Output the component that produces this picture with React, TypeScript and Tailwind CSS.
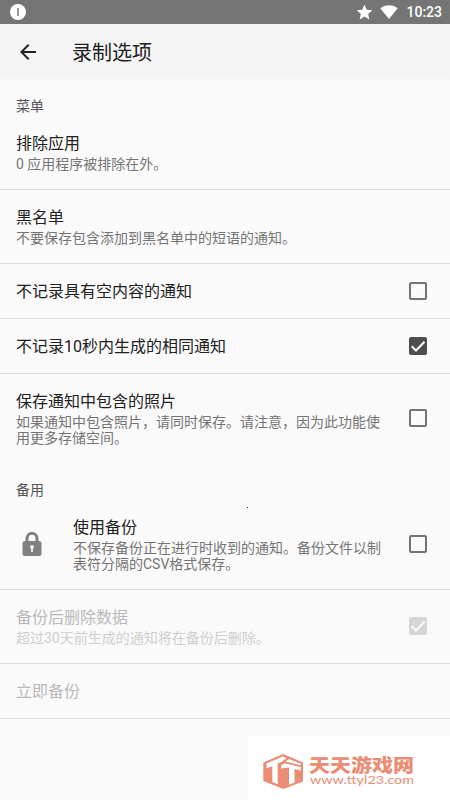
import { ReactNode, useState } from "react";

function Checkbox({
  checked,
  disabled = false,
  onClick,
}: {
  checked: boolean;
  disabled?: boolean;
  onClick?: () => void;
}) {
  return (
    <button
      role="checkbox"
      aria-checked={checked}
      disabled={disabled}
      onClick={onClick}
      className={`size-6 shrink-0 ${disabled ? "text-[#d6d6d6]" : checked ? "text-[#4d4d4d]" : "text-[#737373]"}`}
    >
      <svg viewBox="0 0 24 24" className="size-6" fill="none">
        {checked ? (
          <>
            <rect x="3" y="3" width="18" height="18" rx="2" fill="currentColor" />
            <path d="M5.7 12.2l4.3 4.3 8.5-8.8" stroke="#fafafa" strokeWidth="2" />
          </>
        ) : (
          <rect x="4" y="4" width="16" height="16" rx="1" stroke="currentColor" strokeWidth="2" />
        )}
      </svg>
    </button>
  );
}

function SectionTitle({ children }: { children: ReactNode }) {
  return <h2 className="px-4 text-sm leading-5 text-[#555555]">{children}</h2>;
}

function Row({
  title,
  summary,
  icon,
  disabled = false,
  divider = true,
  children,
}: {
  title: string;
  summary?: string;
  icon?: ReactNode;
  disabled?: boolean;
  divider?: boolean;
  children?: ReactNode;
}) {
  return (
    <div
      className={`flex items-center px-4 ${summary ? "py-[17px]" : "pb-[15px] pt-[17px]"} ${divider ? "border-b border-[#dadada]" : ""}`}
    >
      {icon && <div className="w-[57px] shrink-0">{icon}</div>}
      <div className="min-w-0 flex-1">
        <div className={`text-base leading-[22px] ${disabled ? "text-[#b9b9b9]" : "text-[#212121]"}`}>
          {title}
        </div>
        {summary && (
          <p
            className={`mt-px max-w-[368px] text-sm leading-4 ${disabled ? "text-[#cfcfcf]" : "text-[#757575]"}`}
          >
            {summary}
          </p>
        )}
      </div>
      {children && <div className="-mb-px -mt-[3px] ml-5 mr-1 flex">{children}</div>}
    </div>
  );
}

function LockIcon() {
  return (
    <svg viewBox="0 0 24 28" className="-mt-px ml-1 h-7 w-6" fill="none">
      <path d="M7 12V8.500a5 5.300 0 0 1 10 0V12" stroke="#808080" strokeWidth="3" />
      <rect x="2.500" y="11" width="19" height="15" rx="2.500" fill="#808080" />
      <circle cx="12" cy="17" r="2" fill="#fafafa" />
      <path d="M11.2 17h1.600v5h-1.600z" fill="#fafafa" />
    </svg>
  );
}

function SiteLogo() {
  return (
    <svg viewBox="0 0 202 64" className="h-16 w-[202px]" fill="#e98d74">
      {/* Cube with a T on both faces */}
      <path d="M35.300 18L55 26.500v19L35.300 53L15.300 45V26.500z" />
      <path d="M18.500 27.500L35 20.500l3.500 1.700L34 25.500l-4.300 2v20.700L24.300 46V30.200l-5.800 2z" fill="#fff" />
      <path d="M41 23l11.700 4.800v1.500L37.500 25.500z" fill="#fff" />
      <path d="M33 29.800L36.500 27.300L52.700 31v3.400L46.500 33v13.500L41 48.700V31.600L33 32.500z" fill="#fff" />
      <text
        x="61"
        y="35.500"
        textLength="105"
        lengthAdjust="spacingAndGlyphs"
        className="font-['Noto_Sans_CJK_SC',sans-serif] text-[18px] font-black"
      >
        天天游戏网
      </text>
      <text
        x="62"
        y="48"
        textLength="104"
        lengthAdjust="spacingAndGlyphs"
        className="font-['Lato',sans-serif] text-[11px]"
      >
        www.ttyl23.com
      </text>
    </svg>
  );
}

export default function App() {
  const [skipEmpty, setSkipEmpty] = useState(false);
  const [skipSame, setSkipSame] = useState(true);
  const [savePhotos, setSavePhotos] = useState(false);
  const [useBackup, setUseBackup] = useState(false);

  return (
    <div className="relative flex h-[800px] w-[450px] flex-col overflow-hidden bg-[#fafafa] font-['Roboto','Noto_Sans_CJK_SC',sans-serif]">
      {/* Status bar */}
      <div className="flex h-6 shrink-0 items-center justify-between bg-[#757575] pl-[10px] pr-2 text-white">
        <div className="flex size-4 items-center justify-center rounded-full bg-white">
          <div className="h-2 w-[2px] bg-[#999999]" />
        </div>
        <div className="flex items-center">
          <svg viewBox="0 0 24 24" className="mr-[7px] size-[17px]" fill="currentColor">
            <path d="M12 17.8L18.9 22l-1.8-7.9L23 8.9l-7.8-.7L12 1 8.8 8.2 1 8.9l5.9 5.2L5.1 22z" />
          </svg>
          <svg viewBox="0 0 18 14" className="mr-2 h-[14px] w-[18px]" fill="currentColor">
            <path d="M9 14L.3 3.2C2.7 1.3 5.7.2 9 .2s6.300 1.100 8.700 3z" />
          </svg>
          <span className="text-sm font-medium leading-6">10:23</span>
        </div>
      </div>

      {/* Toolbar */}
      <header className="flex h-14 shrink-0 items-center bg-linear-to-b from-[#f5f5f5] from-95% to-[#f8f8f8] px-4">
        <button aria-label="back" className="size-6 text-[#212121]">
          <svg viewBox="0 0 24 24" className="size-6" fill="currentColor">
            <path d="M20 11H7.830l5.590-5.590L12 4l-8 8 8 8 1.410-1.410L7.830 13H20z" />
          </svg>
        </button>
        <h1 className="ml-8 pt-0.5 text-xl leading-7 text-[#212121]">录制选项</h1>
      </header>

      <main>
        <div className="h-9 pt-4">
          <SectionTitle>菜单</SectionTitle>
        </div>
        <Row title="排除应用" summary="0 应用程序被排除在外。" />
        <Row title="黑名单" summary="不要保存包含添加到黑名单中的短语的通知。" />
        <Row title="不记录具有空内容的通知">
          <Checkbox checked={skipEmpty} onClick={() => setSkipEmpty(!skipEmpty)} />
        </Row>
        <Row title="不记录10秒内生成的相同通知">
          <Checkbox checked={skipSame} onClick={() => setSkipSame(!skipSame)} />
        </Row>
        <Row
          title="保存通知中包含的照片"
          summary="如果通知中包含照片，请同时保存。请注意，因为此功能使用更多存储空间。"
          divider={false}
        >
          <Checkbox checked={savePhotos} onClick={() => setSavePhotos(!savePhotos)} />
        </Row>

        <div className="h-[37px] pt-[17px]">
          <SectionTitle>备用</SectionTitle>
        </div>
        <Row
          title="使用备份"
          summary="不保存备份正在进行时收到的通知。备份文件以制表符分隔的CSV格式保存。"
          icon={<LockIcon />}
        >
          <Checkbox checked={useBackup} onClick={() => setUseBackup(!useBackup)} />
        </Row>
        <Row title="备份后删除数据" summary="超过30天前生成的通知将在备份后删除。" disabled>
          <Checkbox checked disabled />
        </Row>
        <Row title="立即备份" disabled />
      </main>

      <div className="absolute left-[247px] top-[507px] size-px bg-[#333333]" />
      <div className="absolute bottom-0 right-0 bg-white">
        <SiteLogo />
      </div>
    </div>
  );
}
